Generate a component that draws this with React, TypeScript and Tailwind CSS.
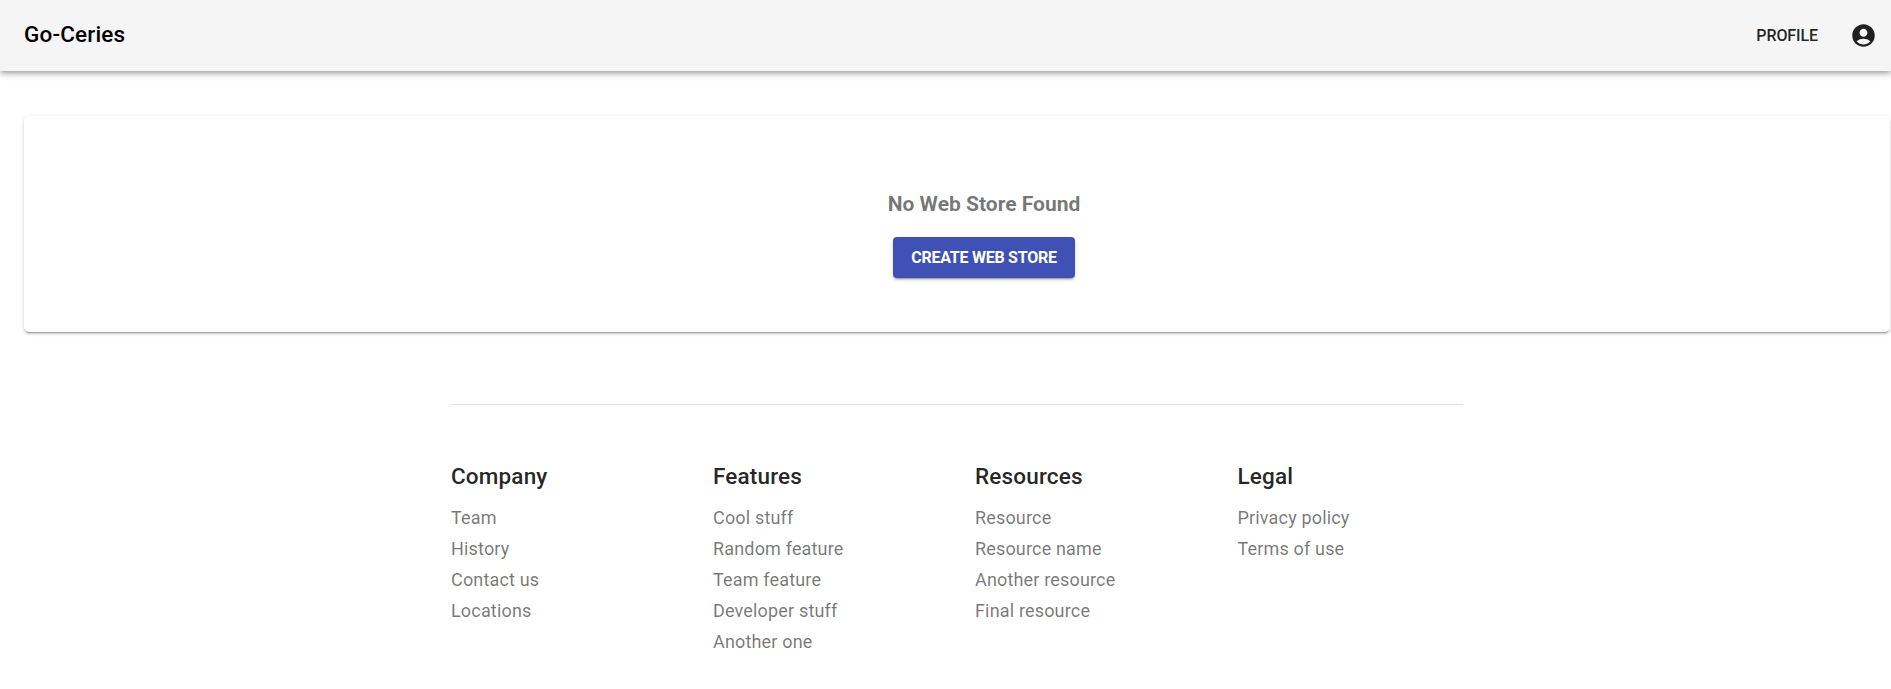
import React from "react";
import { MdAccountCircle } from "react-icons/md";

const columns = [
  { title: "Company", items: ["Team", "History", "Contact us", "Locations"] },
  { title: "Features", items: ["Cool stuff", "Random feature", "Team feature", "Developer stuff", "Another one"] },
  { title: "Resources", items: ["Resource", "Resource name", "Another resource", "Final resource"] },
  { title: "Legal", items: ["Privacy policy", "Terms of use"] },
];

export default function App() {
  return (
    <div className="h-[689px] overflow-hidden bg-white font-['Roboto',sans-serif] text-black/87">
      <header className="flex h-[71px] items-center bg-[#f5f5f5] pl-6 pr-[10px] shadow-[0px_2px_4px_-1px_rgba(0,0,0,0.2),0px_4px_5px_0px_rgba(0,0,0,0.14),0px_1px_10px_0px_rgba(0,0,0,0.12)]">
        <h1 className="grow pb-1 text-[22.5px] font-medium leading-8 tracking-[0.0075em] text-black">Go-Ceries</h1>
        <span className="mr-7 text-base font-medium leading-7 tracking-[-0.1px]">PROFILE</span>
        <span className="flex p-1"><MdAccountCircle size={27} /></span>
      </header>
      <main className="ml-6 mt-[45px] flex h-[216px] w-[1866px] flex-col items-center rounded-[5px] bg-white pl-[54px] pt-[72px] shadow-[0px_3px_1px_-2px_rgba(0,0,0,0.2),0px_2px_2px_0px_rgba(0,0,0,0.14),0px_1px_5px_0px_rgba(0,0,0,0.12)]">
        <h2 className="text-[21px] font-bold leading-8 text-black/54">No Web Store Found</h2>
        <button className="mt-[17px] h-[41px] w-[182px] rounded bg-[#3f51b5] text-base font-bold tracking-[-0.25px] text-white shadow-[0px_3px_1px_-2px_rgba(0,0,0,0.2),0px_2px_2px_0px_rgba(0,0,0,0.14),0px_1px_5px_0px_rgba(0,0,0,0.12)]">CREATE WEB STORE</button>
      </main>
      <footer className="ml-[451px] mt-[72px] grid w-[1012px] grid-cols-[262px_262px_262.5px_auto] border-t border-black/12 pt-[53px]">
        {columns.map((c) => (
          <section key={c.title}>
            <h3 className="mb-[10px] text-[22.5px] font-medium leading-9 tracking-[0.0075em]">{c.title}</h3>
            <ul>
              {c.items.map((i) => (
                <li key={i} className="h-[31px] text-[18px] leading-7 tracking-[0.00938em] text-black/54">{i}</li>
              ))}
            </ul>
          </section>
        ))}
      </footer>
    </div>
  );
}
